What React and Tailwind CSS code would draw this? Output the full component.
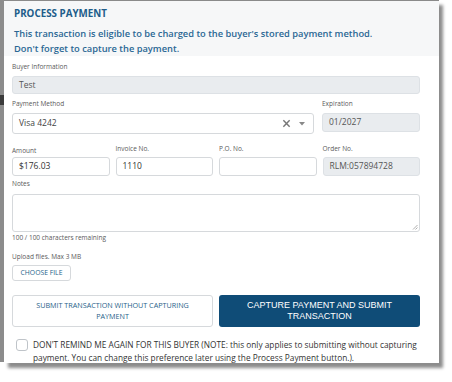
import { useState } from 'react';

const Label = ({ children, className = '' }) => (
  <div className={`text-[6.5px] leading-[10px] text-[#5a5a5a] ${className}`}>{children}</div>
);

const Field = ({ value, disabled, className = '' }) => (
  <div
    className={`flex items-center rounded-[3px] border px-[6px] text-[8.5px] ${
      disabled ? 'bg-[#e9ecef] border-[#dde1e5] text-[#555]' : 'bg-white border-[#d6d9dc] text-[#333]'
    } ${className}`}
  >
    {value}
  </div>
);

export default function App() {
  const [remind, setRemind] = useState(false);

  return (
    <div className="flex h-[382px] w-[452px] bg-white font-['Open_Sans',sans-serif]">
      {/* backdrop sliver */}
      <div className="flex h-[362px] w-[4px] flex-col bg-[#8c8c8c]">
        <div className="mt-[95px] h-[10px] bg-[#3a3a3a]" />
      </div>

      <div className="flex h-[363px] w-[435px] flex-col border-t border-[#8a8a8a] bg-white shadow-[4px_5px_3px_rgba(0,0,0,0.45)]">
        {/* header */}
        <div className="h-[59px] bg-[#f6f7f8] px-[10px] pt-[6px]">
          <h2 className="text-[9.8px] font-bold leading-[14px] text-[#215d8a]">PROCESS PAYMENT</h2>
          <p className="mt-[5px] text-[9.3px] font-semibold leading-[15px] text-[#2a6794]">
            This transaction is eligible to be charged to the buyer&apos;s stored payment method.
            <br />
            Don&apos;t forget to capture the payment.
          </p>
        </div>

        {/* body */}
        <div className="flex flex-col pl-[8px] pr-[19px]">
          <Label className="mt-[6px]">Buyer Information</Label>
          <Field value="Test" disabled className="mt-[4px] h-[18px]" />

          <div className="mt-[5px] flex gap-[8px]">
            <div className="flex w-[302px] flex-col">
              <Label>Payment Method</Label>
              <div className="mt-[4px] flex h-[21px] items-center rounded-[3px] border border-[#d6d9dc] bg-white pl-[6px] pr-[8px] text-[8.5px] text-[#444]">
                <span className="flex-1">Visa 4242</span>
                <svg width="9" height="9" viewBox="0 0 10 10" className="mr-[8px]">
                  <path d="M1.5 1.5l7 7M8.5 1.5l-7 7" stroke="#777" strokeWidth="1.6" />
                </svg>
                <svg width="6" height="4" viewBox="0 0 6 4">
                  <path d="M0 0h6L3 3.5z" fill="#888" />
                </svg>
              </div>
            </div>
            <div className="flex flex-1 flex-col">
              <Label>Expiration</Label>
              <Field value="01/2027" disabled className="mt-[4px] h-[19px]" />
            </div>
          </div>

          <div className="mt-[10px] grid grid-cols-4 gap-x-[6px]">
            <div className="flex flex-col">
              <Label className="mt-[2px]">Amount</Label>
              <Field value="$176.03" className="mt-[1px] h-[19px]" />
            </div>
            <div className="flex flex-col">
              <Label>Invoice No.</Label>
              <Field value="1110" className="mt-[3px] h-[19px]" />
            </div>
            <div className="flex flex-col">
              <Label>P.O. No.</Label>
              <Field value="" className="mt-[3px] h-[19px]" />
            </div>
            <div className="flex flex-col">
              <Label>Order No.</Label>
              <Field value="RLM:057894728" disabled className="mt-[3px] h-[19px]" />
            </div>
          </div>

          <Label className="mt-[3px]">Notes</Label>
          <div className="relative mt-[5px] h-[38px] rounded-[3px] border border-[#d6d9dc] bg-white">
            <svg width="6" height="6" viewBox="0 0 6 6" className="absolute bottom-[1px] right-[1px]">
              <path d="M5.5 1L1 5.5M5.5 3.5L3.5 5.5" stroke="#999" strokeWidth="0.8" />
            </svg>
          </div>
          <Label className="mt-[1px]">100 / 100 characters remaining</Label>

          <Label className="mt-[9px]">Upload files. Max 3 MB</Label>
          <button className="mt-[3px] h-[16px] w-[59px] rounded-[3px] border border-[#d6d9dc] bg-white text-[6.8px] text-[#1f5f8b]">
            CHOOSE FILE
          </button>

          <div className="mt-[14px] flex gap-[6px]">
            <button className="flex h-[32px] w-[201px] items-center justify-center rounded-[3px] border border-[#d6d9dc] bg-white px-[10px] text-[7.2px] leading-[11px] text-[#2a5f8a]">
              SUBMIT TRANSACTION WITHOUT CAPTURING
              <br />
              PAYMENT
            </button>
            <button className="flex h-[32px] flex-1 items-center justify-center rounded-[3px] bg-[#0f4c77] px-[10px] font-['Liberation_Sans',sans-serif] text-[9px] leading-[11px] text-white">
              CAPTURE PAYMENT AND SUBMIT
              <br />
              TRANSACTION
            </button>
          </div>

          <label className="mt-[11px] flex gap-[5px] pl-[4px]">
            <input
              type="checkbox"
              checked={remind}
              onChange={(e) => setRemind(e.target.checked)}
              className="mt-[1px] h-[12px] w-[12px] shrink-0 appearance-none rounded-[3px] border border-[#bfc4c9] bg-white"
            />
            <span className="whitespace-nowrap text-[8.3px] leading-[13px] text-[#333]">
              DON&apos;T REMIND ME AGAIN FOR THIS BUYER (NOTE: this only applies to submitting without capturing
              <br />
              payment. You can change this preference later using the Process Payment button.).
            </span>
          </label>
        </div>
      </div>
    </div>
  );
}
